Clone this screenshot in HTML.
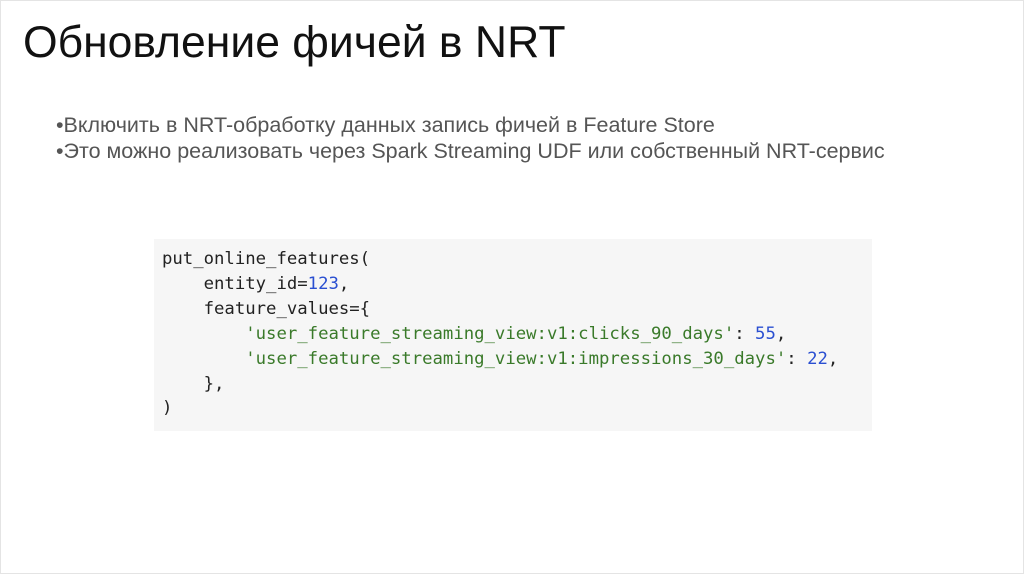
<!DOCTYPE html>
<html><head><meta charset="utf-8"><style>
html,body{margin:0;padding:0;background:#fff;}
body{width:1024px;height:574px;position:relative;overflow:hidden;box-sizing:border-box;border:1px solid #e4e4e4;}
.t{position:absolute;left:22px;top:17px;font-family:"Liberation Sans",sans-serif;font-size:44.5px;color:#111;white-space:nowrap;}
.b{position:absolute;left:55px;font-family:"Liberation Sans",sans-serif;font-size:21.5px;color:#555;white-space:nowrap;}
.code{position:absolute;left:153px;top:238px;width:718px;height:192px;background:#f6f6f6;}
pre{margin:0;position:absolute;left:161px;top:246px;font-family:"DejaVu Sans Mono","Liberation Mono",monospace;font-size:17.3px;line-height:24.9px;color:#222;}
.n{color:#2a4fd1}.s{color:#3a7a2a}
</style></head><body>
<div class="t">Обновление фичей в NRT</div>
<div class="b" style="top:112px">•Включить в NRT-обработку данных запись фичей в Feature Store</div>
<div class="b" style="top:138px">•Это можно реализовать через Spark Streaming UDF или собственный NRT-сервис</div>
<div class="code"></div>
<pre>put_online_features(
    entity_id=<span class="n">123</span>,
    feature_values={
        <span class="s">'user_feature_streaming_view:v1:clicks_90_days'</span>: <span class="n">55</span>,
        <span class="s">'user_feature_streaming_view:v1:impressions_30_days'</span>: <span class="n">22</span>,
    },
)</pre>
</body></html>
